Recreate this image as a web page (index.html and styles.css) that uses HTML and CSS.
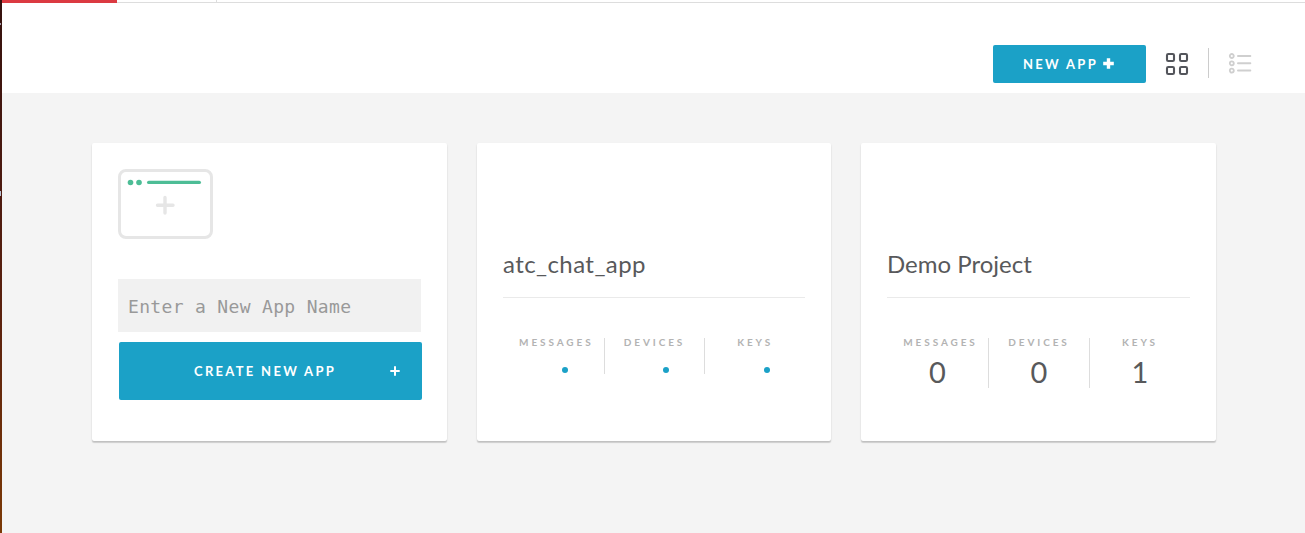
FILE: index.html
```html
<!DOCTYPE html>
<html lang="en">
<head>
<meta charset="utf-8">
<title>Apps</title>
<link rel="stylesheet" href="styles.css">
</head>
<body>
<div class="edge"><i class="edge-spark"></i><i class="edge-mark"></i></div>
<div class="page">
  <div class="tabs"><span class="tab-active"></span><span class="tab"></span><span class="tab-rest"></span></div>
  <header class="toolbar">
    <button class="btn new-app"><span class="new-label">NEW APP</span><svg class="new-plus" width="11" height="11" viewBox="0 0 11 11"><path d="M5.5 .2v10.6M.2 5.5h10.6" stroke="#fff" stroke-width="3.4"/></svg></button>
    <svg class="grid-icon" width="24" height="24" viewBox="0 0 24 24" fill="none" stroke="#53555b" stroke-width="2.1"><rect x="2" y="2" width="7" height="7" rx="1.3"/><rect x="15" y="2" width="7" height="7" rx="1.3"/><rect x="2" y="15" width="7" height="7" rx="1.3"/><rect x="15" y="15" width="7" height="7" rx="1.3"/></svg>
    <span class="separator"></span>
    <svg class="list-icon" width="24" height="22" viewBox="0 0 24 22" fill="none" stroke="#cfcfcf"><g stroke-width="1.8"><circle cx="3.8" cy="4" r="2"/><circle cx="3.8" cy="11.3" r="2"/><circle cx="3.8" cy="18.6" r="2"/></g><path d="M10 4h12.3M10 11.3h12.3M10 18.6h12.3" stroke-width="2" stroke-linecap="round"/></svg>
  </header>
  <main class="cards">
    <section class="card create">
      <svg class="window-icon" width="95" height="70" viewBox="0 0 95 70" fill="none"><rect x="1.5" y="1.5" width="92" height="67" rx="6.5" stroke="#e6e6e6" stroke-width="3"/><g fill="#4dbd96"><circle cx="12.5" cy="13.5" r="2.8"/><circle cx="21" cy="13.5" r="2.8"/><rect x="29" y="11.7" width="54" height="3.4" rx="1.7"/></g><path d="M47 28.5v15.5M39.5 36.2h15.5" stroke="#e6e6e6" stroke-width="3.4" stroke-linecap="round"/></svg>
      <input class="name-input" type="text" placeholder="Enter a New App Name">
      <button class="btn create-btn"><span class="create-label">CREATE NEW APP</span><svg class="create-plus" width="10" height="10" viewBox="0 0 10 10"><path d="M5 .3v9.4M.3 5h9.4" stroke="#fff" stroke-width="2"/></svg></button>
    </section>
    <section class="card">
      <h2 class="title chat">atc_chat_app</h2>
      <div class="stats">
        <div class="stat"><span class="label messages">MESSAGES</span><i class="dot"></i></div>
        <div class="stat"><span class="label devices">DEVICES</span><i class="dot"></i></div>
        <div class="stat"><span class="label keys">KEYS</span><i class="dot"></i></div>
      </div>
    </section>
    <section class="card">
      <h2 class="title demo">Demo Project</h2>
      <div class="stats">
        <div class="stat"><span class="label messages">MESSAGES</span><b class="value">0</b></div>
        <div class="stat"><span class="label devices">DEVICES</span><b class="value">0</b></div>
        <div class="stat"><span class="label keys">KEYS</span><b class="value">1</b></div>
      </div>
    </section>
  </main>
</div>
</body>
</html>
```
FILE: styles.css
```css
* { box-sizing: border-box; }
body { margin: 0; height: 533px; display: flex; overflow: hidden; background: #f4f4f4; font-family: Lato, "Open Sans", sans-serif; color: #58595b; }
.edge { width: 2px; height: 533px; flex: none; background: linear-gradient(#35120e, #4c1a10 35%, #5c220e 60%, #7b3906); }
.edge-spark, .edge-mark { display: block; width: 1px; height: 2px; background: #a59aaa; margin-top: 23px; }
.edge-mark { height: 5px; margin-top: 166px; background: #b9c2d2; }
.page { flex: 1; min-width: 0; }
.tabs { display: flex; height: 3px; background: #fff; }
.tab-active { width: 115px; background: #db3a41; }
.tab { width: 100px; border-right: 1px solid #ddd; border-bottom: 1px solid #ddd; }
.tab-rest { flex: 1; border-bottom: 1px solid #ddd; }
.toolbar { display: flex; align-items: flex-start; justify-content: flex-end; height: 90px; padding: 42px 53px 0 0; background: #fff; }
.btn { border: 0; border-radius: 2px; background: #1ba1c7; color: #fff; font-family: inherit; font-weight: 700; padding: 0; display: flex; align-items: center; text-align: left; }
.new-app { width: 153px; height: 38px; padding: 0 0 1px 30px; }
.new-label { font-size: 13px; letter-spacing: 2.3px; width: 80px; white-space: nowrap; line-height: 16px; }
.new-plus { margin-bottom: 1px; }
.grid-icon { margin: 7px 0 0 19px; }
.separator { width: 1px; height: 30px; background: #ccc; margin: 3px 19px 0 19px; }
.list-icon { margin-top: 7px; }
.cards { display: grid; grid-template-columns: 355px 354px 355px; gap: 30px; padding: 50px 89px 0 90px; }
.card { height: 298px; border-radius: 2px; background: #fff; box-shadow: 0 1px 2px rgba(0,0,0,.12), 0 2px 1px rgba(0,0,0,.13); padding: 0 26px; }
.create { padding-top: 26px; }
.window-icon { display: block; }
.name-input { display: block; width: 303px; height: 53px; margin-top: 40px; border: 0; padding: 2px 10px 0; border-radius: 0; background: #f1f1f1; font: 18px "DejaVu Sans Mono", monospace; letter-spacing: .33px; outline: 0; }
.name-input::placeholder { color: #999; opacity: 1; }
.create-btn { width: 303px; height: 58px; margin: 10px 0 0 1px; padding: 0 22px 1px 75px; justify-content: space-between; }
.create-label { font-size: 13px; letter-spacing: 2.3px; white-space: nowrap; }
.create-plus { margin-bottom: -1px; }
.title { margin: 0; height: 155px; padding-top: 106px; border-bottom: 1px solid #eaeaea; font-weight: 400; font-size: 24px; line-height: 30px; white-space: nowrap; }
.chat { letter-spacing: .42px; }
.stats { display: grid; grid-template-columns: repeat(3, 1fr); margin-top: 40px; align-items: start; }
.stat { display: flex; flex-direction: column; align-items: center; min-width: 0; }
.stat + .stat { border-left: 1px solid #ddd; }
.label { height: 10px; font-size: 10px; font-weight: 700; line-height: 8px; letter-spacing: 2.9px; color: #b3b3b3; white-space: nowrap; }
.messages { margin-left: 6px; }
.dot { width: 6px; height: 6px; margin: 19px 0 1px 23px; border-radius: 50%; background: #1ba1c7; }
.value { height: 32px; margin-top: 8px; font-weight: 400; font-size: 29px; line-height: 31px; }
```
